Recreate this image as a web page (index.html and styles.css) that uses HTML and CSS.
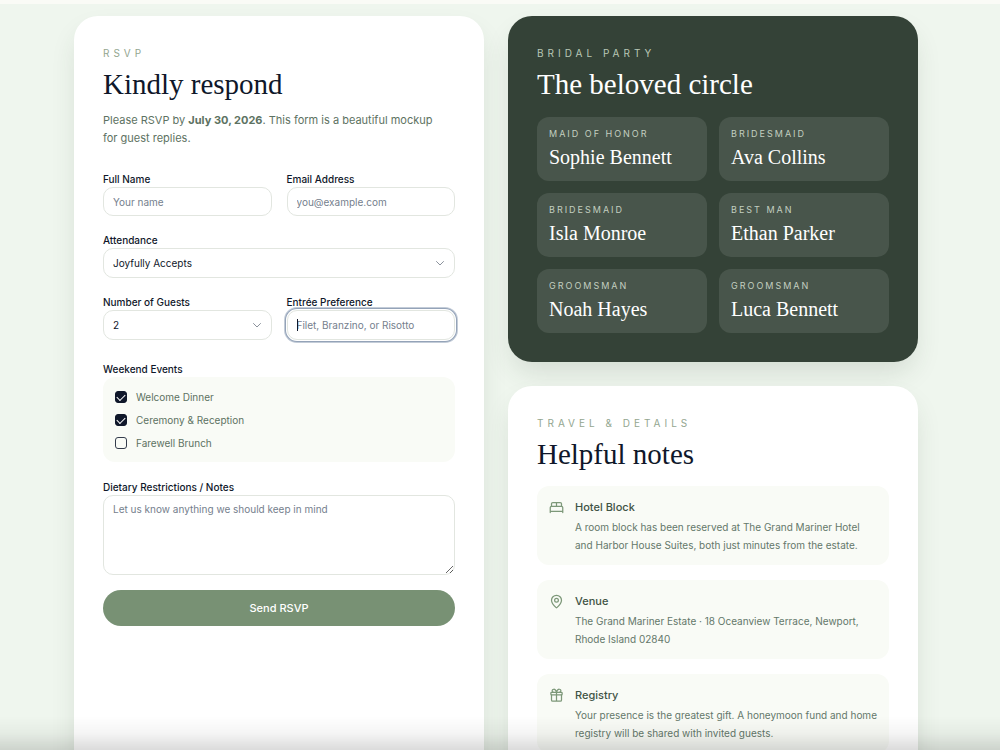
FILE: index.html
```html
<!DOCTYPE html>
<html lang="en">
<head>
<meta charset="utf-8">
<meta name="viewport" content="width=device-width, initial-scale=1">
<title>RSVP</title>
<link rel="stylesheet" href="styles.css">
</head>
<body>
<main class="page">
  <section class="card">
    <p class="eyebrow">RSVP</p>
    <h2 class="title">Kindly respond</h2>
    <p class="intro">Please RSVP by <strong>July 30, 2026</strong>. This form is a beautiful mockup for guest replies.</p>
    <form class="form">
      <div class="row">
        <div class="field">
          <label class="label" for="name">Full Name</label>
          <input class="control" id="name" type="text" placeholder="Your name">
        </div>
        <div class="field">
          <label class="label" for="email">Email Address</label>
          <input class="control" id="email" type="email" placeholder="you@example.com">
        </div>
      </div>
      <div class="field">
        <label class="label" for="attendance">Attendance</label>
        <div class="select-wrap">
          <select class="control select" id="attendance"><option>Joyfully Accepts</option><option>Regretfully Declines</option></select>
          <svg class="chevron" viewBox="0 0 24 24"><path d="m5 9 7 7 7-7"/></svg>
        </div>
      </div>
      <div class="row">
        <div class="field">
          <label class="label" for="guests">Number of Guests</label>
          <div class="select-wrap">
            <select class="control select" id="guests"><option>2</option><option>1</option></select>
            <svg class="chevron" viewBox="0 0 24 24"><path d="m5 9 7 7 7-7"/></svg>
          </div>
        </div>
        <div class="field">
          <label class="label" for="entree">Entrée Preference</label>
          <div class="active-wrap">
            <input class="control active" id="entree" type="text" placeholder="Filet, Branzino, or Risotto" autofocus>
            <span class="caret"></span>
          </div>
        </div>
      </div>
      <fieldset class="events">
        <legend class="label">Weekend Events</legend>
        <div class="event-list">
          <label class="event"><input class="check" type="checkbox" checked>Welcome Dinner</label>
          <label class="event"><input class="check" type="checkbox" checked>Ceremony &amp; Reception</label>
          <label class="event"><input class="check" type="checkbox">Farewell Brunch</label>
        </div>
      </fieldset>
      <div class="field">
        <label class="label" for="notes">Dietary Restrictions / Notes</label>
        <textarea class="control notes" id="notes" placeholder="Let us know anything we should keep in mind"></textarea>
      </div>
      <button class="submit" type="button">Send RSVP</button>
    </form>
  </section>
  <div class="column">
    <section class="card dark">
      <p class="eyebrow">BRIDAL PARTY</p>
      <h2 class="title">The beloved circle</h2>
      <div class="party">
        <div class="member"><p class="role">MAID OF HONOR</p><p class="name">Sophie Bennett</p></div>
        <div class="member"><p class="role">BRIDESMAID</p><p class="name">Ava Collins</p></div>
        <div class="member"><p class="role">BRIDESMAID</p><p class="name">Isla Monroe</p></div>
        <div class="member"><p class="role">BEST MAN</p><p class="name">Ethan Parker</p></div>
        <div class="member"><p class="role">GROOMSMAN</p><p class="name">Noah Hayes</p></div>
        <div class="member"><p class="role">GROOMSMAN</p><p class="name">Luca Bennett</p></div>
      </div>
    </section>
    <section class="card">
      <p class="eyebrow">TRAVEL &amp; DETAILS</p>
      <h2 class="title">Helpful notes</h2>
      <div class="notes-list">
        <article class="note">
          <svg class="icon" viewBox="0 0 24 24"><path d="M2 20v-8a2 2 0 0 1 2-2h16a2 2 0 0 1 2 2v8M4 10V6a2 2 0 0 1 2-2h12a2 2 0 0 1 2 2v4M12 4v6M2 18h20"/></svg>
          <div><h3 class="note-title">Hotel Block</h3><p class="note-text">A room block has been reserved at The Grand Mariner Hotel and Harbor House Suites, both just minutes from the estate.</p></div>
        </article>
        <article class="note">
          <svg class="icon" viewBox="0 0 24 24"><path d="M20 10c0 4.993-5.539 10.193-7.399 11.799a1 1 0 0 1-1.202 0C9.539 20.193 4 14.993 4 10a8 8 0 0 1 16 0"/><circle cx="12" cy="10" r="3"/></svg>
          <div><h3 class="note-title">Venue</h3><p class="note-text">The Grand Mariner Estate · 18 Oceanview Terrace, Newport, Rhode Island 02840</p></div>
        </article>
        <article class="note">
          <svg class="icon" viewBox="0 0 24 24"><rect x="3" y="7" width="18" height="4" rx="1"/><path d="M12 7v14M20 11v8a2 2 0 0 1-2 2H6a2 2 0 0 1-2-2v-8M7.500 7a2.500 2.500 0 0 1 0-5A4.800 8 0 0 1 12 7a4.800 8 0 0 1 4.500-5 2.500 2.500 0 0 1 0 5"/></svg>
          <div><h3 class="note-title">Registry</h3><p class="note-text">Your presence is the greatest gift. A honeymoon fund and home registry will be shared with invited guests.</p></div>
        </article>
      </div>
    </section>
  </div>
</main>
<div class="bottom-shade"></div>
</body>
</html>
```

FILE: styles.css
```css
* { box-sizing: border-box; }
body {
  margin: 0;
  border-top: 4px solid #fafbf6;
  background: #eff6ee;
  font-family: Inter, "Liberation Sans", sans-serif;
  font-size: 10px;
  line-height: 16px;
  color: #0f172a;
}
p, h2, h3 { margin: 0; }
.page {
  display: grid;
  grid-template-columns: 1fr 1fr;
  gap: 24px;
  padding: 12px 82px 40px 74px;
}
.column { display: flex; flex-direction: column; gap: 24px; min-width: 0; }
.card {
  min-width: 0;
  padding: 29px;
  border-radius: 24px;
  background: #fff;
  box-shadow: 0 14px 28px -5px rgba(50, 65, 50, 0.15);
}
.eyebrow {
  font-size: 10px;
  line-height: 17px;
  letter-spacing: 4px;
  color: #93a690;
}
.title {
  margin-top: 7px;
  font-family: "Liberation Serif", serif;
  font-size: 29px;
  font-weight: 400;
  line-height: 30px;
}
.intro {
  margin-top: 12px;
  padding-right: 12px;
  font-size: 11px;
  line-height: 18px;
  color: #5d7262;
}
.form { margin-top: 24px; display: flex; flex-direction: column; gap: 16px; }
.row { display: grid; grid-template-columns: 1fr 1fr; gap: 15px; }
.field { display: flex; flex-direction: column; min-width: 0; }
.label { font-size: 10px; font-weight: 500; line-height: 16px; padding: 0; }
.control {
  width: 100%;
  height: 29px;
  padding: 0 9px;
  border: 1px solid #e2e6e0;
  border-radius: 10px;
  background: #fff;
  font: inherit;
  color: #0f172a;
  outline: none;
}
.control::placeholder { color: #75808d; opacity: 1; }
.select-wrap { display: grid; align-items: center; }
.select-wrap > * { grid-area: 1 / 1; }
.select { height: 30px; appearance: none; }
.chevron {
  justify-self: end;
  width: 12px;
  height: 12px;
  margin-right: 9px;
  fill: none;
  stroke: #8b929c;
  stroke-width: 2;
  stroke-linecap: round;
  stroke-linejoin: round;
  pointer-events: none;
}
.active-wrap { position: relative; display: flex; }
.active {
  height: 30px;
  caret-color: transparent;
  box-shadow: 0 0 0 1px #fff, 0 0 0 2px #94a3b8, 0 0 0 3px #c3ccd8;
}
.caret {
  position: absolute;
  left: 10px;
  top: 9px;
  width: 1px;
  height: 12px;
  background: #0f172a;
}
.events { min-width: 0; margin: 5px 0 1px; padding: 0; border: 0; }
.event-list {
  display: flex;
  flex-direction: column;
  gap: 7px;
  padding: 12px 12px 11px;
  border-radius: 12px;
  background: #f9fbf6;
}
.event { display: flex; align-items: center; gap: 9px; color: #5d7262; }
.check {
  appearance: none;
  display: grid;
  place-items: center;
  width: 12px;
  height: 12px;
  margin: 0;
  border: 1px solid #343c4c;
  border-radius: 3px;
}
.check:checked { background: #0f172a; border-color: #0f172a; }
.check:checked::before {
  content: "";
  width: 7px;
  height: 4px;
  border: solid #fff;
  border-width: 0 0 1px 1px;
  transform: translateY(-1px) rotate(-45deg);
}
.notes { display: block; height: 80px; padding: 5px 9px; resize: vertical; }
.submit {
  height: 36px;
  margin-top: -1px;
  border: 0;
  border-radius: 18px;
  background: #789174;
  font: 500 11px/18px Inter, "Liberation Sans", sans-serif;
  color: #fff;
}
.dark { background: #344237; color: #fff; }
.dark .eyebrow { color: #b9c8b6; }
.party { display: grid; grid-template-columns: 1fr 1fr; gap: 12px; margin-top: 18px; }
.member { padding: 10px 12px 11px; border-radius: 12px; background: #48554b; }
.role { font-size: 9px; line-height: 14px; letter-spacing: 2px; color: #c3cfc0; }
.name { margin-top: 3px; font-family: "Liberation Serif", serif; font-size: 20px; line-height: 26px; }
.notes-list { display: flex; flex-direction: column; gap: 15px; margin-top: 17px; }
.note {
  display: grid;
  grid-template-columns: 15px 1fr;
  gap: 11px;
  padding: 12px 11px 11px 12px;
  border-radius: 12px;
  background: #f9fbf6;
}
.icon {
  width: 15px;
  height: 15px;
  margin-top: 2px;
  fill: none;
  stroke: #7d9879;
  stroke-width: 2;
  stroke-linecap: round;
  stroke-linejoin: round;
}
.note-title { font-size: 11px; font-weight: 500; line-height: 18px; color: #3f5345; }
.note-text { margin-top: 2px; font-size: 10px; line-height: 18px; color: #64786a; }
.bottom-shade {
  position: fixed;
  inset: auto 0 0;
  height: 34px;
  background: linear-gradient(rgba(0, 0, 0, 0), rgba(0, 0, 0, 0.04) 50%, rgba(0, 0, 0, 0.14));
  pointer-events: none;
}
```
